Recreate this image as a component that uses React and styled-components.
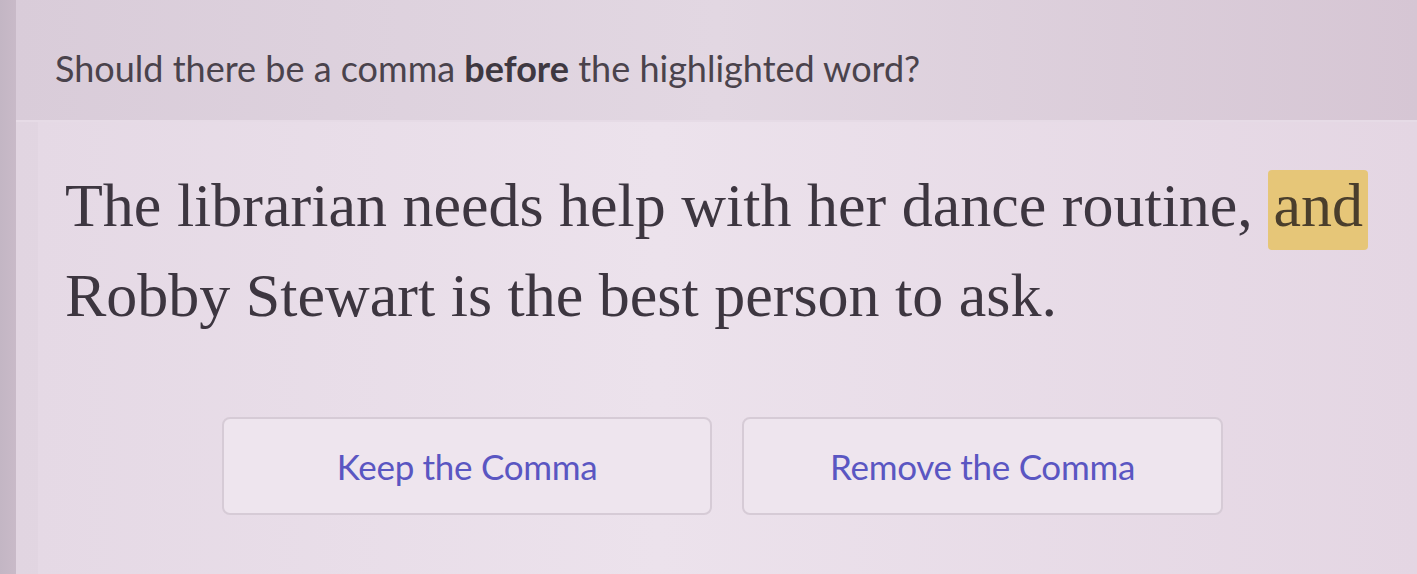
import React from 'react';
import styled, { createGlobalStyle } from 'styled-components';

const GlobalStyle = createGlobalStyle`
  html, body {
    margin: 0;
    padding: 0;
    background: #cfbfcd;
  }
  body {
    font-family: "Lato", "Noto Sans", sans-serif;
  }
`;

const Screen = styled.div`
  width: 1417px;
  height: 574px;
  overflow: hidden;
  display: flex;
  background: linear-gradient(90deg, #c3b6c4 0%, #cdbdcb 2%);
`;

const Panel = styled.div`
  flex: 1;
  margin-left: 16px;
  display: flex;
  flex-direction: column;
  background: linear-gradient(90deg, #e1d5e1 0%, #e9dee9 45%, #e2d3e0 100%);
`;

const PromptBar = styled.div`
  height: 122px;
  box-sizing: border-box;
  padding: 46px 0 0 39px;
  background: linear-gradient(90deg, #d9ccd9 0%, #e2d7e2 50%, #d6c6d4 100%);
  border-bottom: 2px solid #e6dbe6;
  font-size: 36px;
  line-height: 44px;
  color: #4a434c;
  letter-spacing: 0;

  b {
    font-weight: 700;
    color: #3e3841;
  }
`;

const Body = styled.div`
  flex: 1;
  margin-left: 22px;
  padding: 38px 0 0 27px;
  display: flex;
  flex-direction: column;
  background: linear-gradient(90deg, #e5d9e5 0%, #ece2ec 45%, #e4d6e3 100%);
`;

const Sentence = styled.p`
  margin: 0;
  font-family: "Liberation Serif", "Times New Roman", serif;
  font-size: 62px;
  line-height: 90px;
  color: #3d3640;
  white-space: nowrap;
`;

const Highlight = styled.span`
  background: #e6c678;
  border-radius: 4px;
  padding: 1px 5px 11px;
  color: #4a3e2c;
`;

const Choices = styled.div`
  display: flex;
  gap: 30px;
  margin-top: 77px;
  padding-left: 157px;
`;

const Choice = styled.button`
  width: ${p => p.$w}px;
  height: 98px;
  box-sizing: border-box;
  border: 2px solid #d6cbd6;
  border-radius: 8px;
  background: #eee5ee;
  font-family: "Lato", "Noto Sans", sans-serif;
  font-size: 35px;
  letter-spacing: -0.3px;
  color: #5a56c2;
  cursor: pointer;
`;

export default function App() {
  return (
    <>
      <GlobalStyle />
      <Screen>
        <Panel>
          <PromptBar>
            Should there be a comma <b>before</b> the highlighted word?
          </PromptBar>
          <Body>
            <Sentence>
              The librarian needs help with her dance routine, <Highlight>and</Highlight>
              <br />
              Robby Stewart is the best person to ask.
            </Sentence>
            <Choices>
              <Choice $w={490}>Keep the Comma</Choice>
              <Choice $w={481}>Remove the Comma</Choice>
            </Choices>
          </Body>
        </Panel>
      </Screen>
    </>
  );
}
